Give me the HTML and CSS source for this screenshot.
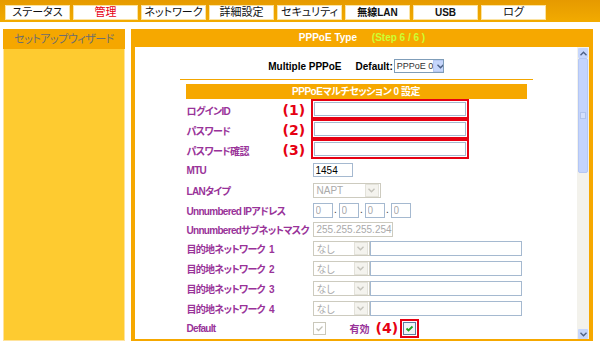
FILE: index.html
```html
<!DOCTYPE html>
<html lang="ja">

<head>
    <meta charset="UTF-8">
    <meta name="viewport" content="width=device-width, initial-scale=1.0">
    <title>PPPoE Type</title>
    <link rel="stylesheet" href="styles.css">
</head>

<body>
    <!-- 上部メニュー -->
    <div class="top">
        <ul class="tabs">
            <li>ステータス</li>
            <li class="on">管理</li>
            <li>ネットワーク</li>
            <li>詳細設定</li>
            <li>セキュリティ</li>
            <li class="b">無線LAN</li>
            <li class="b">USB</li>
            <li>ログ</li>
        </ul>
    </div>

    <div class="main">
        <!-- 左メニュー -->
        <div class="side">
            <div class="side-head">セットアップウィザード</div>
            <div class="side-body"></div>
        </div>

        <!-- 設定画面 -->
        <div class="panel">
            <div class="panel-head">PPPoE Type <span class="step">(Step 6 / 6 )</span></div>
            <div class="panel-body">
                <div class="frame">
                    <div class="multi">
                        <span>Multiple PPPoE</span>
                        <span class="def">Default:</span>
                        <span class="sel on w50">PPPoE 0<i class="arr"><svg width="7" height="5" viewBox="0 0 7 5"><path d="M0.5 0.8 L3.5 3.8 L6.5 0.8" fill="none" stroke="#4d6185" stroke-width="1.4"/></svg></i></span>
                    </div>
                    <div class="rule"></div>
                    <div class="sec-head">PPPoEマルチセッション 0 設定</div>

                    <div class="form">
                        <div class="row">
                            <div class="label">ログインID</div>
                            <div class="mark">(1)</div>
                            <div class="field"><span class="hl"><input class="txt w152" type="text"></span></div>
                        </div>
                        <div class="row">
                            <div class="label">パスワード</div>
                            <div class="mark">(2)</div>
                            <div class="field"><span class="hl"><input class="txt w152" type="password"></span></div>
                        </div>
                        <div class="row">
                            <div class="label">パスワード確認</div>
                            <div class="mark">(3)</div>
                            <div class="field"><span class="hl"><input class="txt w152" type="password"></span></div>
                        </div>
                        <div class="row">
                            <div class="label">MTU</div>
                            <div class="mark"></div>
                            <div class="field"><input class="txt w40" type="text" value="1454"></div>
                        </div>
                        <div class="row">
                            <div class="label">LANタイプ</div>
                            <div class="mark"></div>
                            <div class="field"><span class="sel w68">NAPT<i class="arr"><svg width="7" height="5" viewBox="0 0 7 5"><path d="M0.5 0.8 L3.5 3.8 L6.5 0.8" fill="none" stroke="#c4c3bb" stroke-width="1.4"/></svg></i></span></div>
                        </div>
                        <div class="row">
                            <div class="label">Unnumbered IPアドレス</div>
                            <div class="mark"></div>
                            <div class="field ip">
                                <input class="txt w20 dis" type="text" value="0" disabled><span class="dot">.</span>
                                <input class="txt w20 dis" type="text" value="0" disabled><span class="dot">.</span>
                                <input class="txt w20 dis" type="text" value="0" disabled><span class="dot">.</span>
                                <input class="txt w20 dis" type="text" value="0" disabled>
                            </div>
                        </div>
                        <div class="row short">
                            <div class="label">Unnumberedサブネットマスク</div>
                            <div class="mark"></div>
                            <div class="field"><span class="sel w80">255.255.255.254<i class="arr"><svg width="7" height="5" viewBox="0 0 7 5"><path d="M0.5 0.8 L3.5 3.8 L6.5 0.8" fill="none" stroke="#c4c3bb" stroke-width="1.4"/></svg></i></span></div>
                        </div>
                        <div class="row">
                            <div class="label">目的地ネットワーク <span class="num">1</span></div>
                            <div class="mark"></div>
                            <div class="field"><span class="sel w57">なし<i class="arr"><svg width="7" height="5" viewBox="0 0 7 5"><path d="M0.5 0.8 L3.5 3.8 L6.5 0.8" fill="none" stroke="#c4c3bb" stroke-width="1.4"/></svg></i></span><input class="txt w152 tall" type="text"></div>
                        </div>
                        <div class="row">
                            <div class="label">目的地ネットワーク <span class="num">2</span></div>
                            <div class="mark"></div>
                            <div class="field"><span class="sel w57">なし<i class="arr"><svg width="7" height="5" viewBox="0 0 7 5"><path d="M0.5 0.8 L3.5 3.8 L6.5 0.8" fill="none" stroke="#c4c3bb" stroke-width="1.4"/></svg></i></span><input class="txt w152 tall" type="text"></div>
                        </div>
                        <div class="row">
                            <div class="label">目的地ネットワーク <span class="num">3</span></div>
                            <div class="mark"></div>
                            <div class="field"><span class="sel w57">なし<i class="arr"><svg width="7" height="5" viewBox="0 0 7 5"><path d="M0.5 0.8 L3.5 3.8 L6.5 0.8" fill="none" stroke="#c4c3bb" stroke-width="1.4"/></svg></i></span><input class="txt w152 tall" type="text"></div>
                        </div>
                        <div class="row">
                            <div class="label">目的地ネットワーク <span class="num">4</span></div>
                            <div class="mark"></div>
                            <div class="field"><span class="sel w57">なし<i class="arr"><svg width="7" height="5" viewBox="0 0 7 5"><path d="M0.5 0.8 L3.5 3.8 L6.5 0.8" fill="none" stroke="#c4c3bb" stroke-width="1.4"/></svg></i></span><input class="txt w152 tall" type="text"></div>
                        </div>
                        <div class="row">
                            <div class="label">Default</div>
                            <div class="mark"></div>
                            <div class="field">
                                <span class="chk dis"><svg width="11" height="11" viewBox="0 0 11 11"><path d="M2.5 5.5 L4.5 7.5 L8.5 3.5" fill="none" stroke="#c2c1b8" stroke-width="1.3"/></svg></span>
                                <span class="yuko">有効</span>
                                <span class="mark4">(4)</span>
                                <span class="hl sq"><span class="chk"><svg width="11" height="11" viewBox="0 0 11 11"><path d="M2.5 5.5 L4.5 7.5 L8.5 3.5" fill="none" stroke="#21a121" stroke-width="1.8"/></svg></span></span>
                            </div>
                        </div>
                    </div>
                </div>

                <!-- スクロールバー -->
                <div class="sb">
                    <div class="sb-btn"><svg width="7" height="5" viewBox="0 0 7 5"><path d="M0.5 4.2 L3.5 1.2 L6.5 4.2" fill="none" stroke="#4d6185" stroke-width="1.4"/></svg></div>
                    <div class="sb-thumb"><i class="grip"></i></div>
                    <div class="sb-track"></div>
                    <div class="sb-btn"><svg width="7" height="5" viewBox="0 0 7 5"><path d="M0.5 0.8 L3.5 3.8 L6.5 0.8" fill="none" stroke="#4d6185" stroke-width="1.4"/></svg></div>
                </div>
            </div>
        </div>
    </div>
</body>

</html>
```

FILE: styles.css
```css
body,
ul,
li {
    margin: 0;
    padding: 0;
    list-style: none;
}

body {
    height: 343px;
    overflow: hidden;
    background: #fff;
    font-family: "Liberation Sans", "Noto Sans CJK JP", sans-serif;
    font-size: 11px;
    font-feature-settings: "palt" 1;
    color: #000;
}

/* 上部メニュー */
.top {
    height: 22px;
    box-sizing: border-box;
    padding: 5px 0 0 5px;
    background: linear-gradient(#e69a00, #f2ab00);
}

.tabs {
    display: flex;
    gap: 3px;
}

.tabs li {
    width: 65px;
    height: 15px;
    box-sizing: border-box;
    background: #fff;
    border: 1px solid #fbe3a2;
    text-align: center;
    line-height: 13px;
    font-size: 11px;
    color: #111;
}

.tabs li.on {
    color: #e60012;
}

.tabs li.b {
    font-weight: bold;
    font-size: 10px;
}

.main {
    display: flex;
    height: 312px;
    margin-top: 7px;
    padding-left: 3px;
}

/* 左メニュー */
.side {
    width: 122px;
    display: flex;
    flex-direction: column;
}

.side-head {
    height: 20px;
    line-height: 20px;
    background: #f5a700;
    color: #6e6e6e;
    text-align: center;
    font-size: 11px;
    letter-spacing: -0.5px;
}

.side-body {
    flex: 1;
    background: #fecb30;
    border: 1px solid #ffe39c;
    border-top: none;
}

/* 設定画面 */
.panel {
    width: 462px;
    box-sizing: border-box;
    margin-left: 6px;
    padding: 0 4px 2px;
    background: #f6a800;
    display: flex;
    flex-direction: column;
}

.panel-head {
    height: 18px;
    line-height: 18px;
    text-align: center;
    color: #fff;
    font-weight: bold;
    font-size: 10px;
}

.step {
    color: #ccff33;
    margin-left: 12px;
}

.panel-body {
    flex: 1;
    display: flex;
    background: #fff;
    overflow: hidden;
}

.frame {
    flex: 1;
    padding-top: 12px;
}

.multi {
    display: flex;
    justify-content: center;
    align-items: center;
    height: 14px;
    font-weight: bold;
    font-size: 10px;
}

.def {
    margin-left: 14px;
    margin-right: 1px;
}

.rule {
    width: 353px;
    margin: 6px auto 0;
    border-top: 1px solid #f3a600;
}

.sec-head {
    width: 341px;
    height: 15px;
    margin: 4px auto 0;
    background: #f6a800;
    color: #fff;
    font-weight: bold;
    font-size: 10px;
    line-height: 15px;
    text-align: center;
    letter-spacing: -0.5px;
}

.form {
    width: 341px;
    margin: 1px auto 0;
}

.row {
    display: flex;
    align-items: center;
    height: 20px;
}

.row.short {
    height: 18px;
}

.label {
    width: 96px;
    padding-left: 1px;
    color: #993399;
    font-weight: bold;
    font-size: 10px;
    letter-spacing: -0.7px;
    white-space: nowrap;
}

.label .num {
    margin-left: 2px;
}

.mark,
.mark4 {
    color: #e60012;
    font-family: "DejaVu Sans", sans-serif;
    font-weight: bold;
    font-size: 14px;
}

.mark {
    width: 30px;
}

.field {
    display: flex;
    align-items: center;
}

/* 赤枠 */
.hl {
    display: flex;
    margin: -2px 0 0 -2px;
    padding: 1px;
    border: 2px solid #e60012;
}

.hl.sq {
    margin: 0 0 0 2px;
}

.txt {
    height: 14px;
    box-sizing: border-box;
    margin: 0;
    padding: 0 2px;
    border: 1px solid #a5b9d0;
    background: #fff;
    font-family: "Liberation Sans", sans-serif;
    font-size: 10px;
    color: #000;
}

.txt.dis {
    color: #aaa;
    height: 15px;
}

.txt.tall {
    height: 15px;
}

.w20 { width: 20px; }
.w40 { width: 40px; }
.w152 { width: 152px; }

.dot {
    width: 6px;
    text-align: center;
    color: #333;
    font-size: 10px;
    line-height: 20px;
}

/* セレクト */
.sel {
    display: flex;
    align-items: center;
    height: 15px;
    box-sizing: border-box;
    padding-left: 3px;
    border: 1px solid #cdcbbf;
    background: #fff;
    color: #aaa;
    font-size: 10px;
    white-space: nowrap;
    overflow: hidden;
}

.sel.on {
    height: 14px;
    padding-left: 2px;
    border-color: #7f9db9;
    color: #333;
    font-weight: normal;
    font-size: 9px;
}

.w50 { width: 50px; }
.w57 { width: 57px; }
.w68 { width: 68px; }
.w80 { width: 80px; }

.arr {
    flex-shrink: 0;
    display: flex;
    align-items: center;
    justify-content: center;
    width: 12px;
    height: 11px;
    margin: 0 1px 0 auto;
    border: 1px solid #e3e2da;
    background: #f4f3ee;
}

.sel.on .arr {
    height: 10px;
    border-color: #b6c8f2;
    background: #c6d6fc;
}

/* チェックボックス */
.chk {
    display: flex;
    align-items: center;
    justify-content: center;
    width: 13px;
    height: 13px;
    box-sizing: border-box;
    border: 1px solid #5c7fa3;
    background: #f3f5f8;
}

.chk.dis {
    border-color: #cac8bb;
    background: #fff;
}

.yuko {
    margin: 0 6px 0 24px;
    color: #993399;
    font-weight: bold;
    font-size: 10px;
}

/* スクロールバー */
.sb {
    width: 12px;
    display: flex;
    flex-direction: column;
    background: #f3f2ec;
}

.sb-btn {
    height: 10px;
    margin: 1px 1px 0;
    display: flex;
    align-items: center;
    justify-content: center;
    background: #c6d6fc;
    border-radius: 1px;
}

.sb-thumb {
    height: 115px;
    margin: 0 1px;
    display: flex;
    align-items: center;
    justify-content: center;
    box-sizing: border-box;
    border: 1px solid #b4c7f4;
    border-radius: 2px;
    background: #c4d4fc;
}

.grip {
    width: 4px;
    height: 5px;
    border: 1px solid #b0c3ee;
    background: #d3dffd;
}

.sb-track {
    flex: 1;
}
```
